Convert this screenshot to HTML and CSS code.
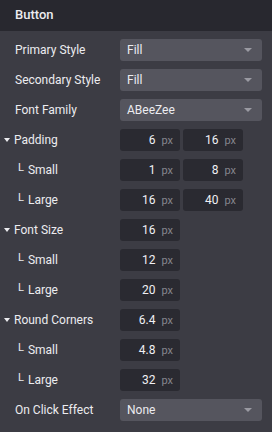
FILE: index.html
```html
<!DOCTYPE html>
<html lang="en">
<head>
    <meta charset="UTF-8">
    <title>Button</title>
    <link rel="stylesheet" href="styles.css">
</head>
<body>
    <div class="panel">
        <div class="panel-header">Button</div>
        <div class="panel-body">
            <div class="row">
                <span class="label">Primary Style</span>
                <div class="select">Fill<span class="caret"></span></div>
            </div>
            <div class="row">
                <span class="label">Secondary Style</span>
                <div class="select">Fill<span class="caret"></span></div>
            </div>
            <div class="row">
                <span class="label">Font Family</span>
                <div class="select">ABeeZee<span class="caret"></span></div>
            </div>

            <div class="row">
                <span class="label group"><span class="toggle"></span>Padding</span>
                <div class="num"><span class="val">6</span><span class="unit">px</span></div>
                <div class="num"><span class="val">16</span><span class="unit">px</span></div>
            </div>
            <div class="row">
                <span class="label sub"><span class="corner">L</span>Small</span>
                <div class="num"><span class="val">1</span><span class="unit">px</span></div>
                <div class="num"><span class="val">8</span><span class="unit">px</span></div>
            </div>
            <div class="row">
                <span class="label sub"><span class="corner">L</span>Large</span>
                <div class="num"><span class="val">16</span><span class="unit">px</span></div>
                <div class="num"><span class="val">40</span><span class="unit">px</span></div>
            </div>

            <div class="row">
                <span class="label group"><span class="toggle"></span>Font Size</span>
                <div class="num"><span class="val">16</span><span class="unit">px</span></div>
            </div>
            <div class="row">
                <span class="label sub"><span class="corner">L</span>Small</span>
                <div class="num"><span class="val">12</span><span class="unit">px</span></div>
            </div>
            <div class="row">
                <span class="label sub"><span class="corner">L</span>Large</span>
                <div class="num"><span class="val">20</span><span class="unit">px</span></div>
            </div>

            <div class="row">
                <span class="label group"><span class="toggle"></span>Round Corners</span>
                <div class="num"><span class="val">6.4</span><span class="unit">px</span></div>
            </div>
            <div class="row">
                <span class="label sub"><span class="corner">L</span>Small</span>
                <div class="num"><span class="val">4.8</span><span class="unit">px</span></div>
            </div>
            <div class="row">
                <span class="label sub"><span class="corner">L</span>Large</span>
                <div class="num"><span class="val">32</span><span class="unit">px</span></div>
            </div>

            <div class="row">
                <span class="label">On Click Effect</span>
                <div class="select">None<span class="caret"></span></div>
            </div>
        </div>
    </div>
</body>
</html>
```

FILE: styles.css
```css
html, body {
    margin: 0;
    padding: 0;
    background-color: #3c3c44;
}
body {
    font-family: Roboto, "Noto Sans", sans-serif;
    font-size: 12px;
    color: #ececf0;
}
.panel {
    width: 272px;
    height: 432px;
    background-color: #3c3c44;
}
.panel-header {
    height: 31px;
    line-height: 30px;
    padding-left: 15px;
    font-size: 13px;
    font-weight: 500;
    background-color: #28282f;
}
.panel-body {
    padding: 8px 10px 0 15px;
    display: flex;
    flex-direction: column;
    gap: 8px;
}
.row {
    display: flex;
    align-items: center;
    height: 22px;
}
.label {
    width: 105px;
    flex: none;
    white-space: nowrap;
    display: flex;
    align-items: center;
}
.label.group {
    margin-left: -11px;
    width: 116px;
}
.toggle {
    width: 0;
    height: 0;
    border-left: 3.5px solid transparent;
    border-right: 3.5px solid transparent;
    border-top: 4px solid #ececf0;
    margin-right: 4px;
}
.label.sub {
    padding-left: 3px;
    width: 102px;
}
.corner {
    font-size: 11px;
    margin-right: 4px;
    position: relative;
    top: -3px;
}
.select {
    flex: none;
    width: 142px;
    height: 22px;
    box-sizing: border-box;
    padding-left: 7px;
    border-radius: 3px;
    background-color: #55555e;
    display: flex;
    align-items: center;
    justify-content: space-between;
}
.caret {
    width: 0;
    height: 0;
    border-left: 4px solid transparent;
    border-right: 4px solid transparent;
    border-top: 4px solid #9a9aa2;
    margin-right: 10px;
}
.num {
    flex: none;
    width: 60px;
    height: 22px;
    box-sizing: border-box;
    border-radius: 3px;
    background-color: #2a2a31;
    display: flex;
    align-items: center;
    justify-content: flex-end;
    padding-right: 7px;
}
.num + .num {
    margin-left: 3px;
}
.val {
    color: #f0f0f4;
}
.unit {
    color: #86868e;
    margin-left: 6px;
    font-size: 11px;
}
```
